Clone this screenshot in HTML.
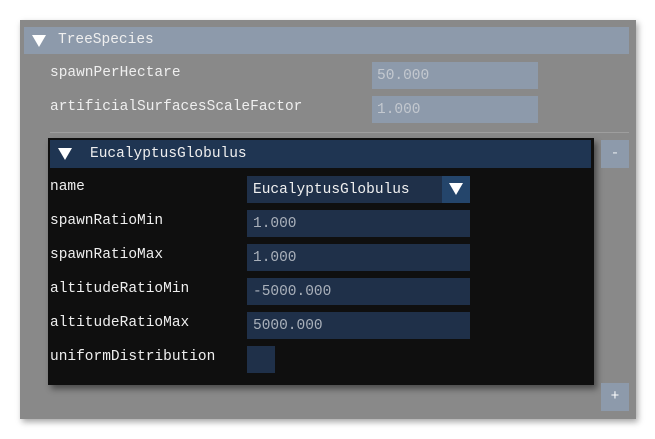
<!DOCTYPE html>
<html><head><style>
*{margin:0;padding:0;box-sizing:border-box}
body{width:655px;height:439px;background:#fff;position:relative;overflow:hidden;font-family:"Liberation Mono","DejaVu Sans Mono",monospace;font-size:14.5px;color:#ececec}
.a{position:absolute}
.outer{left:20px;top:20px;width:616px;height:399px;background:#898989;box-shadow:2px 3px 6px rgba(0,0,0,.35)}
.bar{background:#8d9aab}
.inp{background:#8d9aab;color:#c3c8cf;padding:6px 0 0 5px;height:27px}
.dinp{background:#1f3049;color:#a9b0ba;padding:6px 0 0 6px;height:27px}
.tri{width:0;height:0;border-left:7px solid transparent;border-right:7px solid transparent;border-top:12px solid #fff}
.lbl{color:#efefef}
</style></head><body>
<div class="a outer"></div>
<div class="a bar" style="left:24px;top:27px;width:605px;height:27px"></div>
<div class="a tri" style="left:32px;top:35px"></div>
<div class="a lbl" style="left:58px;top:32px">TreeSpecies</div>
<div class="a lbl" style="left:50px;top:65px">spawnPerHectare</div>
<div class="a inp" style="left:372px;top:62px;width:166px">50.000</div>
<div class="a lbl" style="left:50px;top:99px">artificialSurfacesScaleFactor</div>
<div class="a inp" style="left:372px;top:96px;width:166px">1.000</div>
<div class="a" style="left:50px;top:132px;width:579px;height:1px;background:#9e9e9e"></div>
<div class="a" style="left:48px;top:138px;width:546px;height:247px;background:#0f0f0f;box-shadow:3px 4px 6px rgba(0,0,0,.45)"></div>
<div class="a" style="left:50px;top:140px;width:541px;height:28px;background:#1f3552"></div>
<div class="a tri" style="left:58px;top:148px"></div>
<div class="a lbl" style="left:90px;top:146px">EucalyptusGlobulus</div>
<div class="a bar" style="left:601px;top:140px;width:28px;height:28px;color:#e0e4ea;text-align:center;line-height:28px">-</div>
<div class="a lbl" style="left:50px;top:179px">name</div>
<div class="a dinp" style="left:247px;top:176px;width:223px;color:#f0f0f0">EucalyptusGlobulus</div>
<div class="a" style="left:442px;top:176px;width:28px;height:27px;background:#24456b"></div>
<div class="a tri" style="left:449px;top:183px"></div>
<div class="a lbl" style="left:50px;top:213px">spawnRatioMin</div>
<div class="a dinp" style="left:247px;top:210px;width:223px">1.000</div>
<div class="a lbl" style="left:50px;top:247px">spawnRatioMax</div>
<div class="a dinp" style="left:247px;top:244px;width:223px">1.000</div>
<div class="a lbl" style="left:50px;top:281px">altitudeRatioMin</div>
<div class="a dinp" style="left:247px;top:278px;width:223px">-5000.000</div>
<div class="a lbl" style="left:50px;top:315px">altitudeRatioMax</div>
<div class="a dinp" style="left:247px;top:312px;width:223px">5000.000</div>
<div class="a lbl" style="left:50px;top:349px">uniformDistribution</div>
<div class="a dinp" style="left:247px;top:346px;width:28px"></div>
<div class="a bar" style="left:601px;top:383px;width:28px;height:28px;color:#fff;text-align:center;line-height:28px">+</div>
</body></html>
